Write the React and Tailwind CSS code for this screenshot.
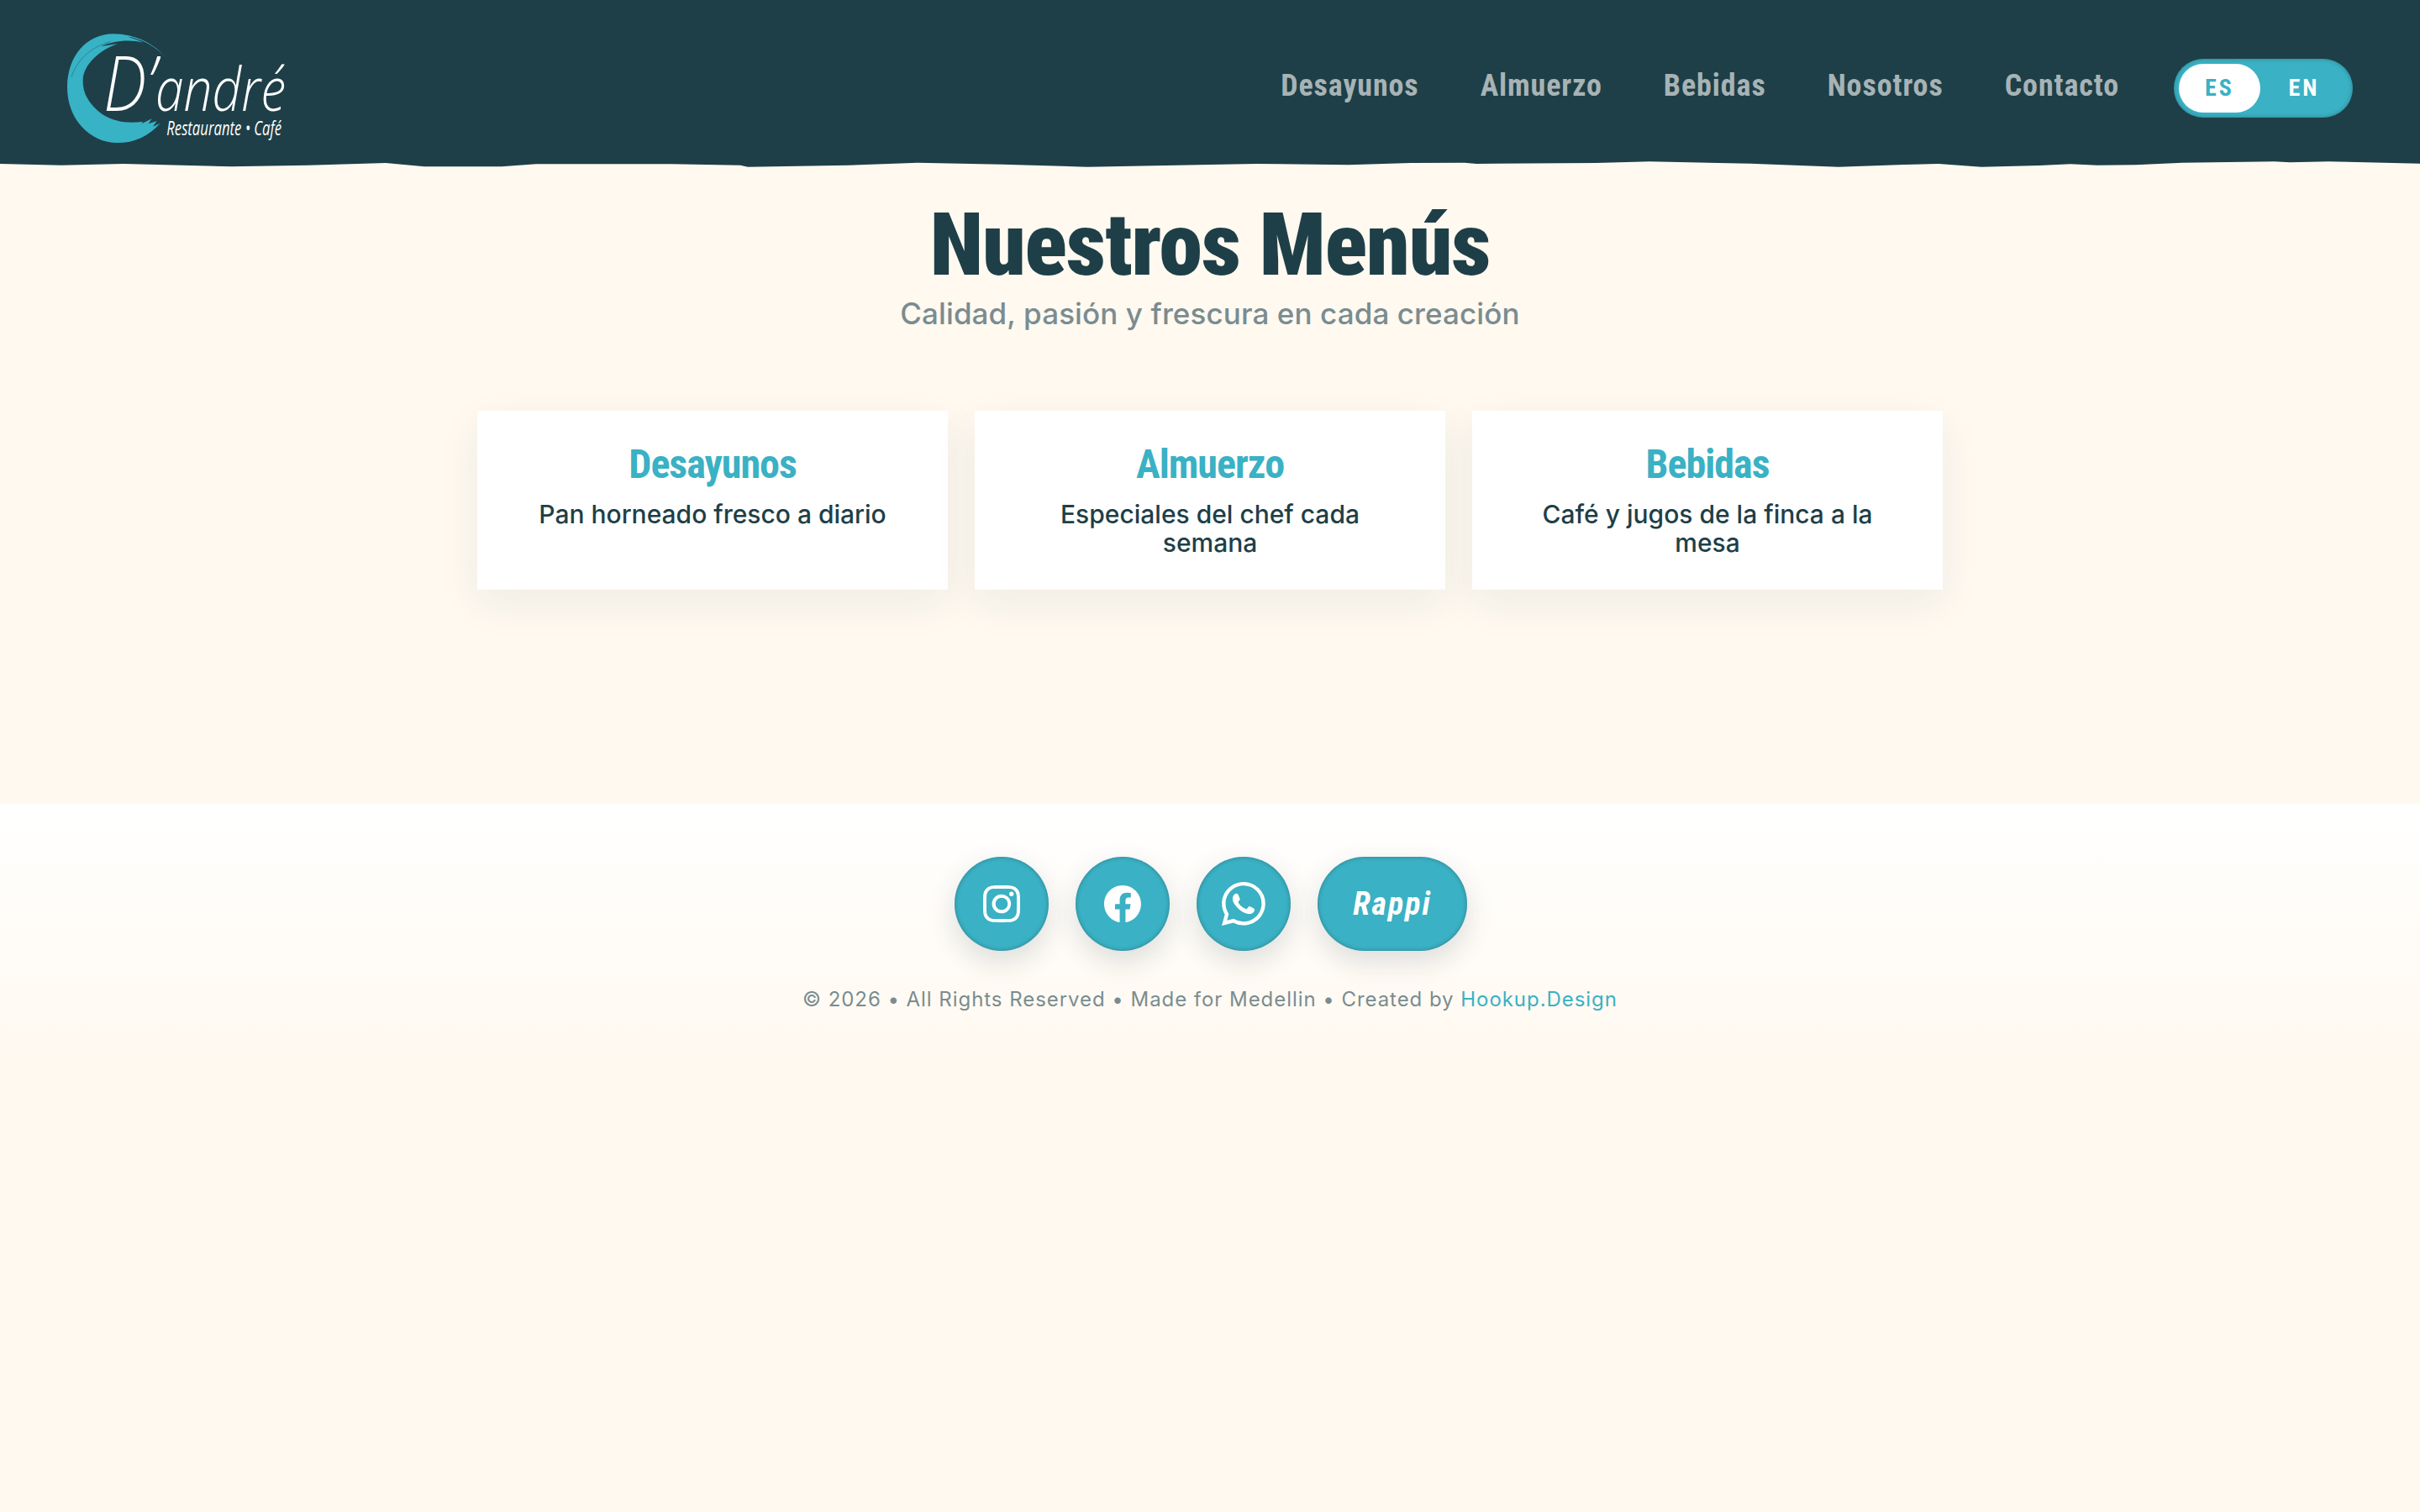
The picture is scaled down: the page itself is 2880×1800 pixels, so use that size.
import React from "react";
import { BsInstagram, BsFacebook, BsWhatsapp } from "react-icons/bs";

const navLinks = ["Desayunos", "Almuerzo", "Bebidas", "Nosotros", "Contacto"];

const menus = [
  { title: "Desayunos", text: "Pan horneado fresco a diario" },
  { title: "Almuerzo", text: "Especiales del chef cada semana" },
  { title: "Bebidas", text: "Café y jugos de la finca a la mesa" },
];

function Logo() {
  return (
    <svg viewBox="0 0 900 450" className="w-[300px] h-[150px] shrink-0 overflow-visible">
      <path
        d="M415 118C370 65 300 31 225 31C130 31 60 110 60 222C60 335 140 420 240 420C300 420 350 397 392 350L366 362L380 342L350 352L362 334L325 352L330 344C280 352 225 345 185 318C140 285 114 245 116 195C118 150 160 95 240 66L180 76C225 54 285 50 332 62C300 48 280 42 270 40C330 48 380 80 415 118Z"
        fill="#38b2c5"
      />
      <path d="M75 185C95 125 140 80 215 58" fill="none" stroke="#1e3f48" strokeWidth="2" opacity="0.6" />
      <text
        x="190"
        y="305"
        fill="#ffffff"
        fontFamily="'Open Sans', sans-serif"
        fontStyle="italic"
        fontWeight="300"
        fontSize="215"
        textLength="650"
        lengthAdjust="spacingAndGlyphs"
      >
        <tspan fontSize="270">D’</tspan>andré
      </text>
      <text
        x="415"
        y="392"
        fill="#ffffff"
        fontFamily="'Open Sans', sans-serif"
        fontStyle="italic"
        fontSize="70"
        textLength="410"
        lengthAdjust="spacingAndGlyphs"
      >
        Restaurante • Café
      </text>
    </svg>
  );
}

function TornEdge() {
  return (
    <svg
      viewBox="0 0 2880 8"
      preserveAspectRatio="none"
      className="absolute left-0 top-full w-full h-[8px]"
    >
      <path
        d="M0 3L73 4.7L147 3L275 6.3L367 4.7L459 2L505 6.3L597 6.3L638 3.3L799 3.3L881 4.7L890 6.7L1010 4.7L1092 1.7L1193 3.7L1294 6.7L1440 4L1495 3L1605 4.3L1679 2L1743 1.7L1757 3L1899 2L1963 .3L2083 2.7L2188 6.7L2266 4L2307 3L2358 6.7L2427 5L2464 3.3L2496 4.7L2542 4.3L2597 1.7L2707 .3L2725 1.3L2771 .3L2880 2.7V0H0Z"
        fill="#1e3f48"
      />
    </svg>
  );
}

function SocialButton({ children, wide }) {
  return (
    <a
      href="#"
      className={`${wide ? "w-[178px]" : "w-[112px]"} h-[112px] rounded-full bg-[#3ab1c4] text-white flex items-center justify-center shadow-[inset_0_0_5px_rgba(30,63,72,0.45),0_12px_32px_rgba(30,63,72,0.16)]`}
    >
      {children}
    </a>
  );
}

export default function App() {
  return (
    <div className="min-h-[1800px] bg-[#fff9f0] font-['Inter',sans-serif]">
      <header className="relative z-10 h-[192px] bg-[#1e3f48] flex items-center justify-between pl-[60px] pr-[80px] pt-[17px]">
        <Logo />
        <nav className="flex items-center gap-[65px]">
          <div className="flex items-center gap-[73px] pb-[6px]">
            {navLinks.map((link) => (
              <a
                key={link}
                href="#"
                className="font-['Roboto_Condensed',sans-serif] text-[36px] leading-none font-bold tracking-[0.9px] text-[#a7b3b5]"
              >
                {link}
              </a>
            ))}
          </div>
          <div className="flex items-center w-[213px] h-[70px] p-[6px] rounded-full bg-[#3ab1c4] shadow-[inset_0_0_5px_rgba(30,63,72,0.45)] font-['Roboto_Condensed',sans-serif] text-[28px] font-bold tracking-[3px]">
            <span className="w-[97px] h-[58px] rounded-full bg-white text-[#3ab1c4] flex items-center justify-center">
              ES
            </span>
            <span className="flex-1 text-white text-center">EN</span>
          </div>
        </nav>
        <TornEdge />
      </header>

      <main className="h-[765px] pt-[40px] flex flex-col items-center">
        <h1 className="font-['Roboto_Condensed',sans-serif] text-[104px] leading-[1.15] font-black tracking-[-1px] text-[#1e3f48]">
          Nuestros Menús
        </h1>
        <p className="-mt-[1px] text-[35px] leading-[44px] font-medium tracking-[0.1px] text-[#7a8c90]">
          Calidad, pasión y frescura en cada creación
        </p>
        <div className="mt-[94px] grid grid-cols-3 gap-[32px] w-[1744px]">
          {menus.map((menu) => (
            <div
              key={menu.title}
              className="h-[213px] bg-white px-[64px] pt-[36px] text-center shadow-[0_16px_48px_rgba(30,63,72,0.07)]"
            >
              <h3 className="font-['Roboto_Condensed',sans-serif] text-[48px] leading-[56px] font-bold tracking-[-1px] text-[#3ab1c4]">
                {menu.title}
              </h3>
              <p className="mt-[14px] text-[30px] leading-[34px] font-medium text-[#1e3f48]">
                {menu.text}
              </p>
            </div>
          ))}
        </div>
      </main>

      <footer className="h-[300px] pt-[63px] flex flex-col items-center bg-gradient-to-b from-white to-[#fff9f0]">
        <div className="flex items-center gap-[32px] ml-[2px]">
          <SocialButton>
            <BsInstagram className="w-[44px] h-[44px]" />
          </SocialButton>
          <SocialButton>
            <BsFacebook className="w-[44px] h-[44px]" />
          </SocialButton>
          <SocialButton>
            <BsWhatsapp className="w-[52px] h-[52px]" />
          </SocialButton>
          <SocialButton wide>
            <span className="font-['Roboto_Condensed',sans-serif] italic font-bold text-[38px] tracking-[2px]">
              Rappi
            </span>
          </SocialButton>
        </div>
        <p className="mt-[42px] text-[24px] leading-[32px] tracking-[0.95px] text-[#7a8c90]">
          © 2026 • All Rights Reserved • Made for Medellin • Created by{" "}
          <a href="#" className="text-[#3ab1c4]">
            Hookup.Design
          </a>
        </p>
      </footer>
    </div>
  );
}
